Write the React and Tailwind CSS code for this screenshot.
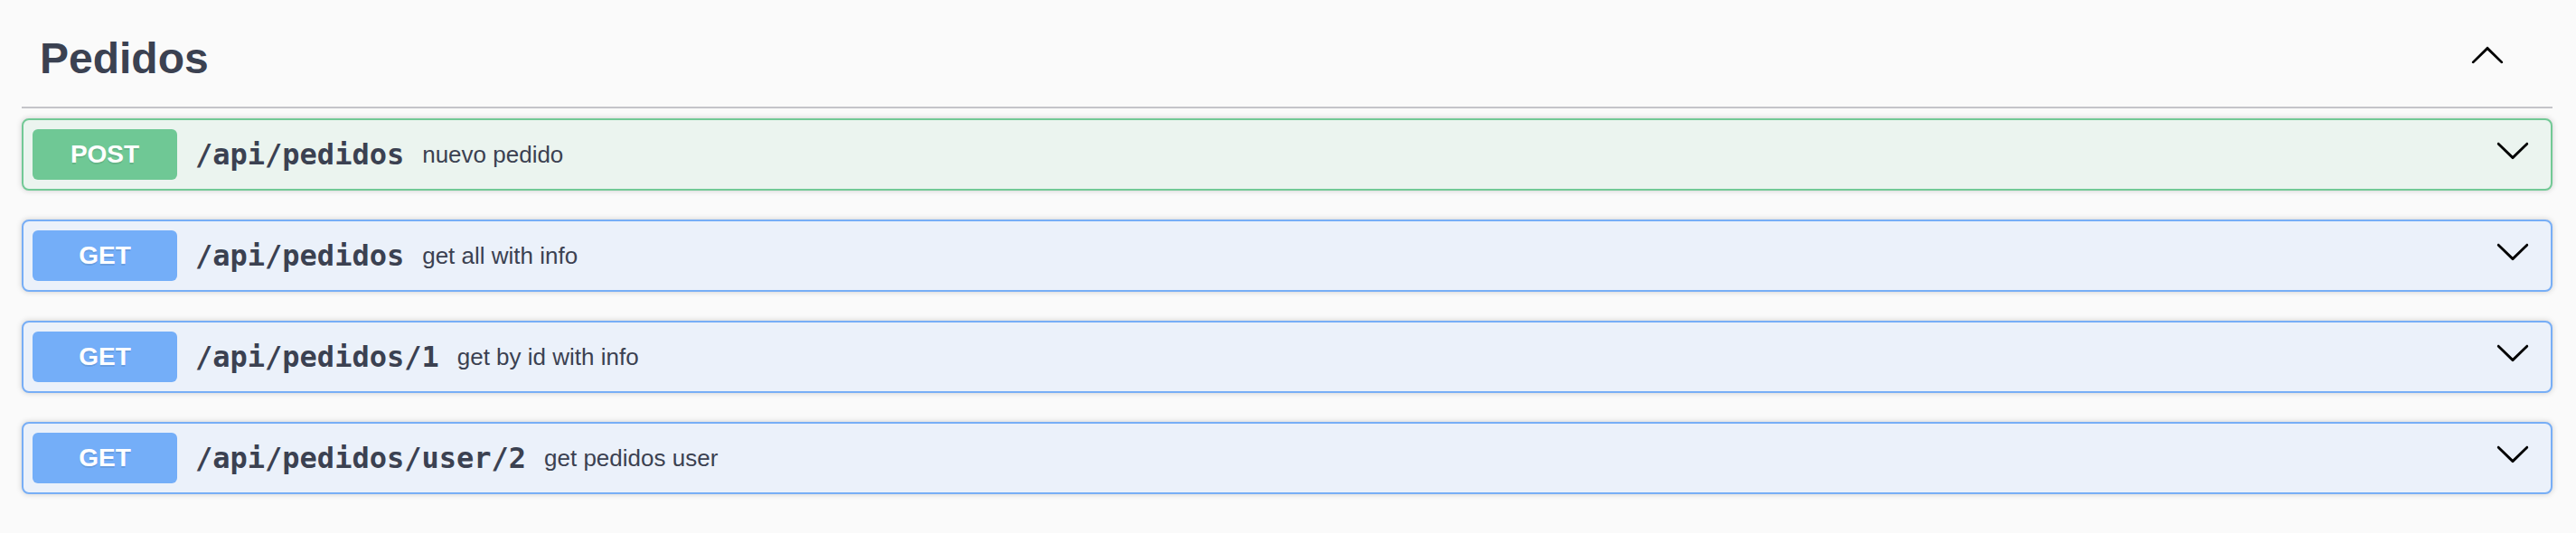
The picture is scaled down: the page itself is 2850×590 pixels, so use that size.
const ENDPOINTS = [
  { method: "POST", path: "/api/pedidos", summary: "nuevo pedido" },
  { method: "GET", path: "/api/pedidos", summary: "get all with info" },
  { method: "GET", path: "/api/pedidos/1", summary: "get by id with info" },
  { method: "GET", path: "/api/pedidos/user/2", summary: "get pedidos user" },
];

const METHOD_STYLES = {
  POST: {
    block: "border-[#72c996] bg-[#ebf4ef]",
    badge: "bg-[#6fc895]",
  },
  GET: {
    block: "border-[#77aef6] bg-[#ebf1fa]",
    badge: "bg-[#74aef8]",
  },
};

function ArrowDown() {
  return (
    <svg width="40" height="40" viewBox="0 0 20 20" aria-hidden="true">
      <path
        fill="#000"
        d="M17.418 6.109c.272-.268.709-.268.979 0s.271.701 0 .969l-7.908 7.83c-.27.268-.707.268-.979 0l-7.908-7.83c-.27-.268-.27-.701 0-.969.271-.268.709-.268.979 0L10 13.25l7.418-7.141z"
      />
    </svg>
  );
}

function ArrowUp() {
  return (
    <svg width="40" height="40" viewBox="0 0 20 20" aria-hidden="true">
      <path
        fill="#000"
        d="M17.418 14.908c.272.268.709.268.979 0s.271-.701 0-.969l-7.908-7.83c-.27-.268-.707-.268-.979 0l-7.908 7.83c-.27.268-.27.701 0 .969.271.268.709.268.979 0L10 7.767l7.418 7.141z"
      />
    </svg>
  );
}

function Operation({ method, path, summary }) {
  const styles = METHOD_STYLES[method];

  return (
    <div
      className={`flex h-[80px] items-start rounded-[8px] border-2 p-[10px] shadow-[0_0_6px_rgba(0,0,0,0.19)] ${styles.block}`}
    >
      <span
        className={`flex h-[56px] w-[160px] shrink-0 items-center justify-center rounded-[6px] text-[28px] font-bold text-white [text-shadow:0_2px_0_rgba(0,0,0,0.1)] ${styles.badge}`}
      >
        {method}
      </span>
      <span className="flex h-[56px] items-center px-5 font-['DejaVu_Sans_Mono',monospace] text-[32px] font-bold text-[#3b4151]">
        {path}
      </span>
      <span className="flex h-[56px] flex-1 items-center text-[26px] text-[#3b4151]">
        {summary}
      </span>
      <span className="mr-3 mt-[3px] shrink-0">
        <ArrowDown />
      </span>
    </div>
  );
}

export default function App() {
  return (
    <div className="min-h-[590px] w-full bg-[#fafafa] pl-6 pr-[26px] font-['Liberation_Sans',Arial,sans-serif]">
      <h3 className="flex items-start justify-between border-b-2 border-[#c4c4c9] pb-[29px] pl-5 pr-[52px] pt-[41px]">
        <span className="text-[48px] font-bold leading-[48px] text-[#3b4151]">
          Pedidos
        </span>
        <span className="-mt-px">
          <ArrowUp />
        </span>
      </h3>
      <div className="mt-[11px] flex flex-col gap-8">
        {ENDPOINTS.map((op, i) => (
          <Operation key={i} {...op} />
        ))}
      </div>
    </div>
  );
}
